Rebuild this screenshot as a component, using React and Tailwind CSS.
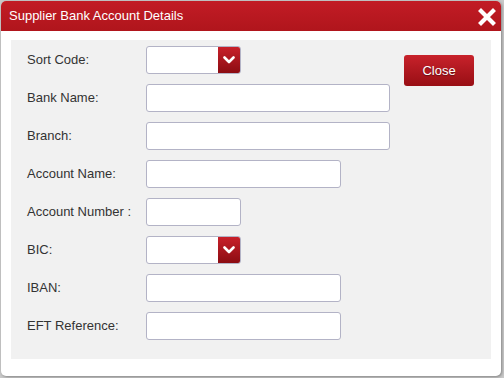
import React from 'react';

const Chevron = () => (
  <svg width="12" height="8" viewBox="0 0 12 8" fill="none">
    <path d="M1.5 1.5 L6 6 L10.5 1.5" stroke="white" strokeWidth="2.6" strokeLinecap="round" strokeLinejoin="round" />
  </svg>
);

const SelectBox = () => (
  <div className="flex w-[95px] h-[28px] rounded-[3px] border border-[#b3b3c6] bg-white overflow-hidden">
    <div className="flex-1" />
    <div className="w-[22px] flex items-center justify-center bg-gradient-to-b from-[#c8202a] to-[#8c0c12]">
      <Chevron />
    </div>
  </div>
);

const TextBox = ({ width }) => (
  <input
    type="text"
    className={`${width} h-[28px] rounded-[3px] border border-[#b3b3c6] bg-white outline-none`}
  />
);

const fields = [
  { label: 'Sort Code:', kind: 'select' },
  { label: 'Bank Name:', width: 'w-[244px]' },
  { label: 'Branch:', width: 'w-[244px]' },
  { label: 'Account Name:', width: 'w-[195px]' },
  { label: 'Account Number :', width: 'w-[95px]' },
  { label: 'BIC:', kind: 'select' },
  { label: 'IBAN:', width: 'w-[195px]' },
  { label: 'EFT Reference:', width: 'w-[195px]' },
];

export default function App() {
  return (
    <div className="w-[504px] h-[378px] bg-[#c9c9c9] pt-px pl-px" style={{ fontFamily: '"Liberation Sans", Arial, sans-serif' }}>
      <div className="w-[500px] h-[375px] bg-white rounded-[5px] overflow-hidden flex flex-col shadow-[1px_1px_3px_rgba(0,0,0,0.35)]">
        <div className="h-[30px] shrink-0 flex items-center justify-between pl-[8px] pr-[5px] bg-gradient-to-b from-[#c21c25] to-[#b0151c]">
          <span className="text-white text-[13px]">Supplier Bank Account Details</span>
          <svg width="18" height="18" viewBox="0 0 18 18" className="mt-[1px]">
            <path d="M3 3 L15 15 M15 3 L3 15" stroke="white" strokeWidth="4.2" strokeLinecap="square" />
          </svg>
        </div>
        <div className="flex-1 pt-[9px] px-[10px] pb-[17px]">
          <div className="h-full bg-[#f1f1f1] flex pl-[16px] pt-[6px] pr-[17px]">
            <div className="flex-1 flex flex-col gap-[10px]">
              {fields.map((f) => (
                <div key={f.label} className="flex items-center h-[28px]">
                  <label className="w-[119px] text-[13px] text-[#333333]">{f.label}</label>
                  {f.kind === 'select' ? <SelectBox /> : <TextBox width={f.width} />}
                </div>
              ))}
            </div>
            <div className="pt-[9px]">
              <button className="w-[70px] h-[31px] rounded-[3px] text-white text-[13px] bg-gradient-to-b from-[#c8222b] to-[#980e14] [text-shadow:0_1px_1px_rgba(0,0,0,0.4)]">
                Close
              </button>
            </div>
          </div>
        </div>
      </div>
    </div>
  );
}
